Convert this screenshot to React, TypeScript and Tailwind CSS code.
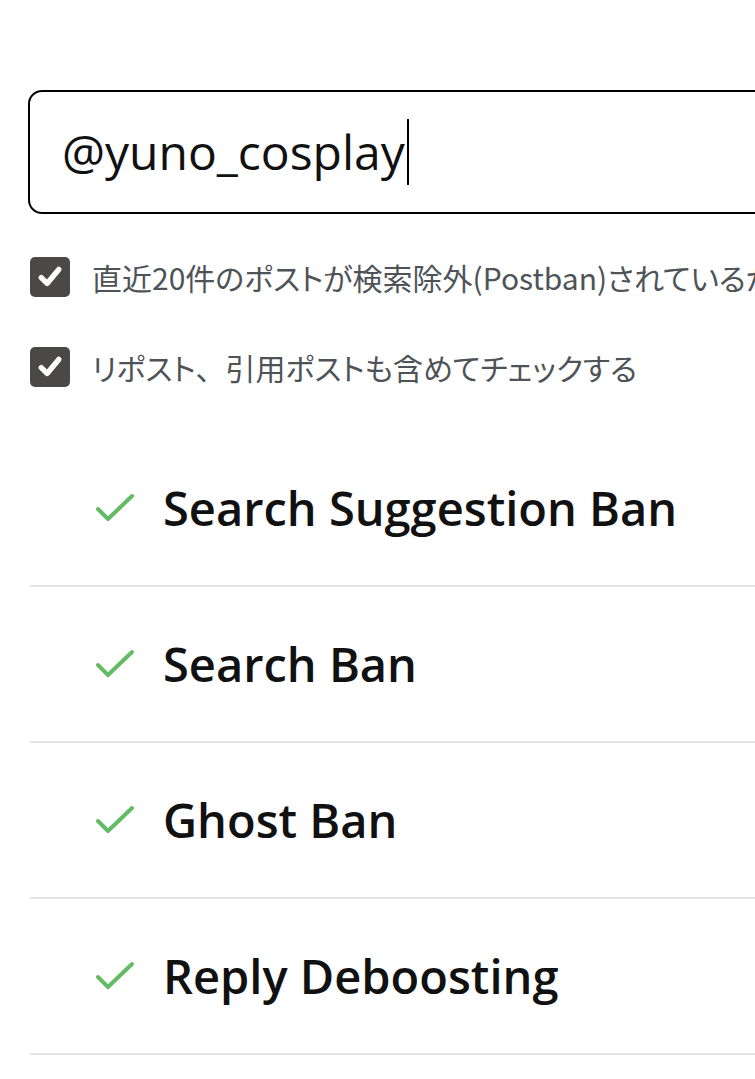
import React from "react";

const font = { fontFamily: '"Open Sans", "Noto Sans", "Noto Sans CJK JP", sans-serif' };

function Box({ children }: { children: React.ReactNode }) {
  return (
    <div className="flex items-center h-[40px]">
      <div className="w-[40px] h-[40px] rounded-[5px] bg-[#4b4948] flex items-center justify-center shrink-0">
        <svg width="28" height="28" viewBox="0 0 24 24">
          <path d="M4.5 12.5 L9.5 17.5 L19.5 5.5" fill="none" stroke="#fff" strokeWidth="4.6" strokeLinecap="round" strokeLinejoin="round" />
        </svg>
      </div>
      <span
        className="ml-[22px] text-[30px] text-[#4e5358] whitespace-nowrap leading-none"
        style={{ fontFamily: '"Noto Sans CJK JP", "Noto Sans", sans-serif', fontFeatureSettings: '"palt"' }}
      >
        {children}
      </span>
    </div>
  );
}

function Row({ title }: { title: string }) {
  return (
    <div className="h-[156px] flex items-center border-b-2 border-[#e4e4e4]">
      <div className="w-[133px] flex justify-end pr-[28px] shrink-0">
        <svg width="40" height="30" viewBox="0 0 40 30">
          <path d="M3 16 L13 26 L37 3" fill="none" stroke="#63bb63" strokeWidth="4" strokeLinecap="round" strokeLinejoin="round" />
        </svg>
      </div>
      <span className="text-[47px] font-semibold text-[#111] whitespace-nowrap" style={font}>
        {title}
      </span>
    </div>
  );
}

export default function App() {
  return (
    <div className="w-[755px] h-[1079px] overflow-hidden bg-white" style={font}>
      <div className="w-[1100px] pl-[28px] pt-[90px]">
        <div className="h-[124px] border-2 border-black rounded-[14px] flex items-center pl-[32px]">
          <span className="text-[48px] text-[#111] leading-none" style={font}>@yuno_cosplay</span>
          <span className="w-[2px] h-[66px] bg-black ml-[2px]" />
        </div>
        <div className="pl-[2px] pt-[43px] flex flex-col gap-[50px]">
          <Box>直近20件のポストが検索除外(Postban)されているかチェックする</Box>
          <Box>
            リポスト<span style={{ fontFeatureSettings: "normal" }}>、</span>引用ポストも含めてチェックする
          </Box>
        </div>
        <div className="mt-[44px] pl-[2px]">
          <Row title="Search Suggestion Ban" />
          <Row title="Search Ban" />
          <Row title="Ghost Ban" />
          <Row title="Reply Deboosting" />
        </div>
      </div>
    </div>
  );
}
